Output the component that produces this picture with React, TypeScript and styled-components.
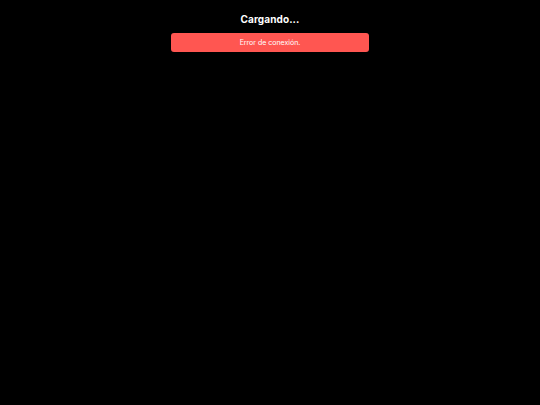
import React from 'react';
import styled, { createGlobalStyle } from 'styled-components';

const GlobalStyle = createGlobalStyle`
  html, body {
    margin: 0;
    padding: 0;
    background: #000000;
  }
  body {
    font-family: Inter, "Open Sans", sans-serif;
  }
`;

const Page = styled.div`
  min-height: 405px;
  display: flex;
  flex-direction: column;
  align-items: center;
  padding-top: 13px;
  box-sizing: border-box;
`;

const Title = styled.h1`
  margin: 0;
  font-size: 10px;
  line-height: 13px;
  font-weight: 700;
  color: #ffffff;
  letter-spacing: 0.1px;
`;

const ErrorBox = styled.div`
  margin-top: 7px;
  width: 198px;
  height: 19px;
  border-radius: 3px;
  background: #ff5651;
  color: #ffffff;
  font-size: 7px;
  display: flex;
  align-items: center;
  justify-content: center;
`;

const App = () => {
  return (
    <>
      <GlobalStyle />
      <Page>
        <Title>Cargando...</Title>
        <ErrorBox>Error de conexión.</ErrorBox>
      </Page>
    </>
  );
};

export default App;
